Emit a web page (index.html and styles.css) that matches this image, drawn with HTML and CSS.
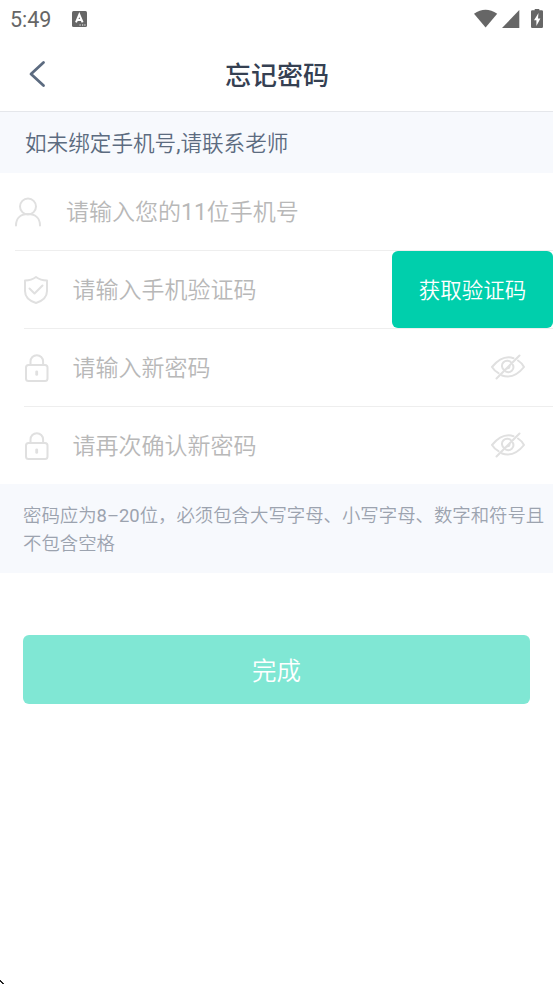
FILE: index.html
```html
<!DOCTYPE html>
<html lang="zh-CN">
<head>
<meta charset="utf-8">
<title>忘记密码</title>
<link rel="stylesheet" href="styles.css">
</head>
<body>
<div class="status">
  <span class="clock">5:49</span>
  <svg class="app-icon" width="15" height="16" viewBox="0 0 15 16"><rect width="15" height="16" rx="1.500" fill="#666"/><path d="M4 11.300 7.300 3.500l3.300 7.800M5 9h4.500" fill="none" stroke="#fff" stroke-width="2"/><path d="M7.500 14h1.200M10 14h1.200M12.300 14h1.200" stroke="#fff" stroke-width="1.200"/></svg>
  <svg class="signals" width="70" height="20" viewBox="0 0 70 20" fill="#666"><path d="M0 4.800Q11.500-3.500 23.200 4.800L11.600 18.600Z"/><path d="M45.300 1v18H28Z"/><path d="M58.200 1.200h2.500V0h4.600v1.200h2.500q1.200 0 1.200 1.200v15.400q0 1.200-1.200 1.200h-9.600q-1.200 0-1.200-1.200V2.400q0-1.200 1.200-1.200Z"/><path d="M64.500 4 60 11.300h2.400V17l4-7.500H64Z" fill="#fff"/></svg>
</div>
<header class="nav">
  <svg class="back" width="18" height="28" viewBox="0 0 18 28"><path d="m15.500 2.500-12.500 11.500 12.500 11.500" fill="none" stroke="#5c6b80" stroke-width="2.800" stroke-linecap="round" stroke-linejoin="round"/></svg>
  <h1>忘记密码</h1>
</header>
<p class="banner">如未绑定手机号<span class="latin">,</span>请联系老师</p>
<form>
  <div class="row phone">
    <svg class="icon" width="26" height="30" viewBox="0 0 26 30"><circle cx="13" cy="9.500" r="8"/><path d="M1 28.500c0-7.500 5-11.500 12-11.500s12 4 12 11.500"/></svg>
    <span class="placeholder">请输入您的<span class="latin">11</span>位手机号</span>
  </div>
  <div class="row code">
    <svg class="icon" width="26" height="30" viewBox="0 0 26 30"><path d="M13 2Q8.500 5.300 2 5.500V16q0 8.500 11 12 11-3.500 11-12V5.500Q17.500 5.300 13 2Z"/><path d="m6.500 13.500 5 5 8-8"/></svg>
    <span class="placeholder">请输入手机验证码</span>
    <button class="get-code" type="button">获取验证码</button>
  </div>
  <div class="row">
    <svg class="icon" width="26" height="30" viewBox="0 0 26 30"><rect x="3" y="12" width="21.500" height="16" rx="2.500"/><path d="M7.500 12V8.500a6.300 6.300 0 0 1 12.600 0V12"/><path d="M13.700 18.800v2.600" stroke-width="2.800"/></svg>
    <span class="placeholder">请输入新密码</span>
    <svg class="eye" width="36" height="26" viewBox="0 0 36 26"><path d="M23.500 4.200Q12.500.500 2 13q2.500 4 6.500 6.200M28 6.500q4 2.500 6 6.500-10 12.500-22 8.500"/><path d="M21.500 9A5.200 5.200 0 1 0 14.300 16.200M16 17.700A5.200 5.200 0 0 0 23 11M17 14.500q3-.5 2.500-3M6.500 24.500l23-23"/></svg>
  </div>
  <div class="row last">
    <svg class="icon" width="26" height="30" viewBox="0 0 26 30"><rect x="3" y="12" width="21.500" height="16" rx="2.500"/><path d="M7.500 12V8.500a6.300 6.300 0 0 1 12.600 0V12"/><path d="M13.700 18.800v2.600" stroke-width="2.800"/></svg>
    <span class="placeholder">请再次确认新密码</span>
    <svg class="eye" width="36" height="26" viewBox="0 0 36 26"><path d="M23.500 4.200Q12.500.500 2 13q2.500 4 6.500 6.200M28 6.500q4 2.500 6 6.500-10 12.500-22 8.500"/><path d="M21.500 9A5.200 5.200 0 1 0 14.300 16.200M16 17.700A5.200 5.200 0 0 0 23 11M17 14.500q3-.5 2.500-3M6.500 24.500l23-23"/></svg>
  </div>
  <p class="hint">密码应为<span class="latin">8–20</span>位，必须包含大写字母、小写字母、数字和符号且不包含空格</p>
  <button class="submit" type="button">完成</button>
</form>
<svg class="corner" width="4" height="4" viewBox="0 0 4 4"><path d="M0 0h1v1h1v1h1v1h1v1H2V3H1V2H0Z" fill="#222"/></svg>
</body>
</html>
```

FILE: styles.css
```css
* { box-sizing: border-box; }
body {
  margin: 0;
  height: 984px;
  position: relative;
  overflow: hidden;
  background: #fff;
  font-family: Roboto, "Noto Sans CJK SC", sans-serif;
}
.status {
  height: 38px;
  display: flex;
  align-items: center;
  padding: 0 10px;
}
.clock { font-size: 21.5px; color: #666; width: 62px; }
.app-icon { margin-bottom: 1px; }
.signals { margin-left: auto; margin-right: -1px; margin-bottom: 1px; }
.nav {
  height: 74px;
  border-bottom: 1px solid #e5e7eb;
  display: flex;
  align-items: center;
  padding-left: 28px;
}
.back { margin-bottom: 2px; }
.nav h1 {
  flex: 1;
  margin: 2px 45px 0 0;
  text-align: center;
  font-size: 26px;
  line-height: 38px;
  font-weight: 500;
  color: #354052;
}
.latin { font-weight: 400; }
.banner {
  margin: 0;
  height: 61px;
  padding: 1px 0 0 25px;
  background: #f7f9fd;
  color: #5c6b80;
  font-size: 21.6px;
  font-weight: 350;
  line-height: 61px;
}
.row {
  height: 78px;
  margin-left: 24px;
  display: flex;
  align-items: center;
  border-bottom: 1px solid #eee;
}
.phone { margin-left: 15px; }
.last { height: 77px; border-bottom: 0; }
.icon, .eye { fill: none; stroke: #e0e0e0; stroke-width: 2; stroke-linecap: round; stroke-linejoin: round; flex: none; }
.icon { margin: 0 0 0 -1px; }
.placeholder {
  margin: 0 0 3px 23.5px;
  font-size: 23px;
  font-weight: 350;
  color: #b8b8b8;
  white-space: nowrap;
}
.phone .icon { margin-left: 0; }
.phone .placeholder { margin-left: 25px; }
.eye { margin: 0 27px 2px auto; }
button { border: 0; padding: 0; font-family: inherit; font-weight: 350; color: #fff; border-radius: 6px; }
.get-code {
  margin-left: auto;
  width: 161px;
  height: 77px;
  padding-bottom: 2px;
  background: #00cfac;
  font-size: 21.5px;
}
.hint {
  margin: 0;
  height: 89px;
  padding: 18px 0 0 23px;
  background: #f7f9fd;
  color: #9ca3af;
  font-size: 18.4px;
  font-weight: 350;
  line-height: 27.5px;
}
.submit {
  display: block;
  width: 507px;
  height: 69px;
  margin: 62px 0 0 23px;
  background: #80e7d4;
  font-size: 24.5px;
}
.corner { position: absolute; left: 0; bottom: 0; }
```
